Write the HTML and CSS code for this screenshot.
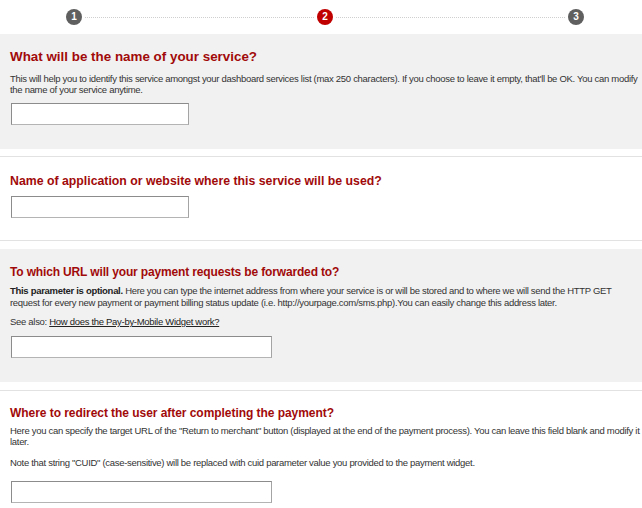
FILE: index.html
```html
<!DOCTYPE html>
<html>
<head>
<meta charset="utf-8">
<link rel="stylesheet" href="styles.css">
</head>
<body>
<div class="steps">
  <span class="step">1</span>
  <span class="dots"></span>
  <span class="step active">2</span>
  <span class="dots"></span>
  <span class="step">3</span>
</div>

<div class="section gray s1">
  <h2 class="h1">What will be the name of your service?</h2>
  <p>This will help you to identify this service amongst your dashboard services list (max 250 characters). If you choose to leave it empty, that'll be OK. You can modify<br>the name of your service anytime.</p>
  <input class="field short" type="text">
</div>

<div class="section white s2">
  <h2 class="h2">Name of application or website where this service will be used?</h2>
  <input class="field short" type="text">
</div>

<div class="section gray s3">
  <h2 class="h3">To which URL will your payment requests be forwarded to?</h2>
  <p><b>This parameter is optional.</b> Here you can type the internet address from where your service is or will be stored and to where we will send the HTTP GET<br>request for every new payment or payment billing status update (i.e. http://yourpage.com/sms.php).You can easily change this address later.</p>
  <p>See also: <a href="#">How does the Pay-by-Mobile Widget work?</a></p>
  <input class="field long" type="text">
</div>

<div class="section white s4">
  <h2 class="h4">Where to redirect the user after completing the payment?</h2>
  <p>Here you can specify the target URL of the "Return to merchant" button (displayed at the end of the payment process). You can leave this field blank and modify it<br>later.</p>
  <p>Note that string "CUID" (case-sensitive) will be replaced with cuid parameter value you provided to the payment widget.</p>
  <input class="field long" type="text">
</div>
</body>
</html>
```

FILE: styles.css
```css
html, body {
  margin: 0;
  padding: 0;
  background: #ffffff;
  font-family: "Liberation Sans", Arial, sans-serif;
  color: #333333;
}

.steps {
  display: flex;
  align-items: center;
  height: 34px;
  padding: 0 58px 0 66px;
  box-sizing: border-box;
}

.step {
  width: 16px;
  height: 16px;
  border-radius: 50%;
  background: #5f5f5f;
  color: #ffffff;
  font-size: 10px;
  font-weight: bold;
  line-height: 16px;
  text-align: center;
  flex: none;
}

.step.active {
  background: #c00000;
}

.dots {
  flex: 1;
  height: 0;
  border-top: 1px dotted #cfcfcf;
  margin: 0 3px;
}

.section {
  padding: 0 10px;
}

.section h2 {
  margin: 0;
  font-size: 13px;
  line-height: 16px;
  font-weight: bold;
  color: #a10a0a;
  white-space: nowrap;
}

.section .h1 { font-size: 13.4px; }
.section .h2 { font-size: 12.3px; }
.section .h3 { font-size: 12px; letter-spacing: -0.15px; }
.section .h4 { font-size: 12px; letter-spacing: -0.05px; }

.section p {
  margin: 0;
  font-size: 9.5px;
  line-height: 11px;
  letter-spacing: -0.3px;
  color: #333333;
  white-space: nowrap;
}

.section p b {
  color: #222222;
}

.section a {
  color: #222222;
  text-decoration: underline;
}

.gray {
  background: #f1f1f1;
}

.white {
  border-top: 1px solid #e2e2e2;
  border-bottom: 1px solid #e2e2e2;
}

.s1 {
  padding-top: 15px;
  padding-bottom: 24px;
}
.s1 p { margin-top: 8px; }
.s1 .field { margin-top: 8px; }

.s2 {
  margin-top: 7px;
  padding-top: 16px;
  padding-bottom: 22px;
}
.s2 .field { margin-top: 7px; }

.s3 {
  margin-top: 8px;
  padding-top: 15px;
  padding-bottom: 24px;
}
.s3 p { margin-top: 5px; line-height: 12px; }
.s3 p + p { margin-top: 7px; }
.s3 .field { margin-top: 8px; }

.s4 {
  margin-top: 8px;
  padding-top: 14px;
  padding-bottom: 20px;
  border-bottom: none;
}
.s4 p { margin-top: 4px; }
.s4 p + p { margin-top: 10px; }
.s4 .field { margin-top: 13px; }

.field {
  display: block;
  box-sizing: border-box;
  height: 22px;
  margin: 0 0 0 1px;
  padding: 0 4px;
  background: #ffffff;
  border: 1px solid #8c8c8c;
  border-bottom-color: #b4b4b4;
  border-right-color: #a4a4a4;
  outline: none;
}

.field.short { width: 178px; }
.field.long { width: 261px; }
```
